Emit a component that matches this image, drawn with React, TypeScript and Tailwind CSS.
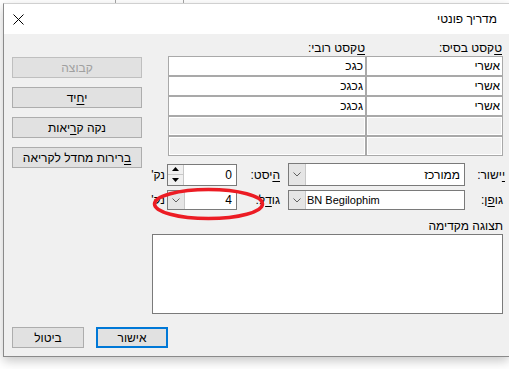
import React from "react";

type Row = [string, string] | null;

const rows: Row[] = [
	["אשרי", "כגכ"],
	["אשרי", "גכגכ"],
	["אשרי", "גכגכ"],
	null,
	null,
];

function U({ children }: { children: React.ReactNode }) {
	return <span className="underline underline-offset-2">{children}</span>;
}

function Chevron() {
	return (
		<svg width="8" height="5" viewBox="0 0 8 5" aria-hidden="true">
			<path d="M0.5 0.5 4 4 7.5 0.5" fill="none" stroke="#606060" strokeWidth="1" />
		</svg>
	);
}

function Combo({ text, ltr, w }: { text: string; ltr?: boolean; w: string }) {
	return (
		<div className={`flex h-full ${w} border border-[#7a7a7a] bg-white`}>
			<div
				dir={ltr ? "ltr" : "rtl"}
				className={`flex flex-1 items-center overflow-hidden whitespace-nowrap ${ltr ? "pl-[1px] text-[11px]" : "pr-[4px]"}`}
			>
				{text}
			</div>
			<div className="flex w-[17px] items-center justify-center border-r border-[#c8c8c8] bg-[#e5e5e5]">
				<Chevron />
			</div>
		</div>
	);
}

function Spin({ value }: { value: string }) {
	return (
		<div className="flex h-full w-[70px] border border-[#7a7a7a] bg-white">
			<div className="flex flex-1 items-center pr-[4px]">{value}</div>
			<div className="flex w-[16px] flex-col border-r border-[#c8c8c8] bg-[#f0f0f0]">
				<div className="flex flex-1 items-center justify-center border-b border-[#c8c8c8]">
					<svg width="7" height="4" viewBox="0 0 7 4">
						<path d="M0 4 3.5 0 7 4Z" fill="#000" />
					</svg>
				</div>
				<div className="flex flex-1 items-center justify-center">
					<svg width="7" height="4" viewBox="0 0 7 4">
						<path d="M0 0 3.5 4 7 0Z" fill="#000" />
					</svg>
				</div>
			</div>
		</div>
	);
}

function Btn({
	children,
	disabled,
	primary,
	w = "w-[130px]",
}: {
	children: React.ReactNode;
	disabled?: boolean;
	primary?: boolean;
	w?: string;
}) {
	return (
		<button
			type="button"
			className={`${w} h-[21px] bg-[#e1e1e1] leading-none ${
				primary ? "border-2 border-[#0078d7]" : disabled ? "border border-[#bfbfbf] text-[#a0a0a0]" : "border border-[#adadad]"
			}`}
		>
			{children}
		</button>
	);
}

export default function App() {
	return (
		<div className="relative h-[369px] w-[509px] overflow-hidden bg-white font-['Liberation_Sans',sans-serif] text-[12px] text-black">
			{/* window behind */}
			<div className="flex h-[3px]">
				<div className="w-[115px]"></div>
				<div className="w-px bg-[#a0a0a0]"></div>
				<div className="w-[67px]"></div>
				<div className="w-px bg-[#a0a0a0]"></div>
			</div>

			<div className="ml-[3px] border-b border-l border-t border-b-[#8a8a8a] border-l-[#8a8a8a] border-t-[#d0d0d0] shadow-[0_4px_10px_rgba(0,0,0,0.22)]">
				{/* title bar */}
				<div className="flex h-[30px] items-center justify-between bg-white pl-[9px] pr-[12px]">
					<svg width="11" height="11" viewBox="0 0 11 11" aria-hidden="true">
						<path d="M0.5 0.5 10.5 10.5M10.5 0.5 0.5 10.5" stroke="#000" strokeWidth="1" />
					</svg>
					<span dir="rtl">מדריך פונטי</span>
				</div>

				{/* body */}
				<div dir="rtl" className="h-[322px] bg-[#f0f0f0] pr-[2px] pt-[6px]">
					<div className="flex gap-[4px]">
						<div className="w-[361px]">
							<div className="mr-[4px] grid h-[16px] w-[335px] grid-cols-[137px_198px] leading-[16px]">
								<div className="pr-[1px]">
									<U>ט</U>קסט בסיס:
								</div>
								<div className="pr-[1px]">
									<U>ט</U>קסט רובי:
								</div>
							</div>

							<div className="mr-[4px] grid w-[335px] grid-cols-[137px_198px]">
								{rows.map((r, i) =>
									r ? (
										<React.Fragment key={i}>
											<div className="h-[20px] border border-[#a9a9a9] bg-white pr-[2px] leading-[18px]">{r[0]}</div>
											<div className="h-[20px] border border-[#a9a9a9] bg-white pr-[2px] leading-[18px]">{r[1]}</div>
										</React.Fragment>
									) : (
										<React.Fragment key={i}>
											<div className="h-[20px] border border-[#a9a9a9] bg-[#f0f0f0] shadow-[inset_0_0_0_1px_#fff]"></div>
											<div className="h-[20px] border border-[#a9a9a9] bg-[#f0f0f0] shadow-[inset_0_0_0_1px_#fff]"></div>
										</React.Fragment>
									)
								)}
							</div>

							<div className="mt-[7px] flex h-[23px] items-center">
								<div className="w-[42px] pr-[2px]">
									<U>י</U>ישור:
								</div>
								<Combo text="ממורכז" w="w-[177px]" />
								<div className="w-[51px] pr-[8px]">
									<U>ה</U>יסט:
								</div>
								<div className="h-[22px]">
									<Spin value="0" />
								</div>
								<div className="w-[21px] pr-[2px]">נק'</div>
							</div>

							<div className="mt-[4px] flex h-[20px] items-center">
								<div className="w-[42px] pr-[4px]">
									גו<U>פ</U>ן:
								</div>
								<Combo text="BN Begilophim" ltr w="w-[177px]" />
								<div className="w-[51px] pr-[8px]">
									גו<U>ד</U>ל:
								</div>
								<Combo text="4" w="w-[70px]" />
								<div className="w-[21px] pr-[2px]">נק'</div>
							</div>

							<div className="mt-[8px] h-[16px] pr-[4px] leading-[16px]">תצוגה מקדימה</div>
							<div className="mr-[4px] h-[80px] w-[351px] border border-[#7a7a7a] bg-white"></div>
						</div>

						<div className="mt-[17px] flex w-[130px] flex-col gap-[9px]">
							<Btn disabled>קבוצה</Btn>
							<Btn>
								י<U>ח</U>יד
							</Btn>
							<Btn>
								נקה ק<U>ר</U>יאות
							</Btn>
							<Btn>
								<U>ב</U>רירות מחדל לקריאה
							</Btn>
						</div>
					</div>

					<div dir="ltr" className="mt-[13px] flex gap-[12px] pl-[8px]">
						<Btn w="w-[72px]">
							<span dir="rtl">ביטול</span>
						</Btn>
						<Btn w="w-[72px]" primary>
							<span dir="rtl">אישור</span>
						</Btn>
					</div>
				</div>
			</div>

			{/* red annotation */}
			<svg className="absolute left-[150px] top-[186px]" width="118" height="36" viewBox="0 0 118 36" aria-hidden="true">
				<ellipse cx="58.5" cy="18" rx="54" ry="14.5" fill="none" stroke="#ec1c24" strokeWidth="3.5" />
			</svg>
		</div>
	);
}
